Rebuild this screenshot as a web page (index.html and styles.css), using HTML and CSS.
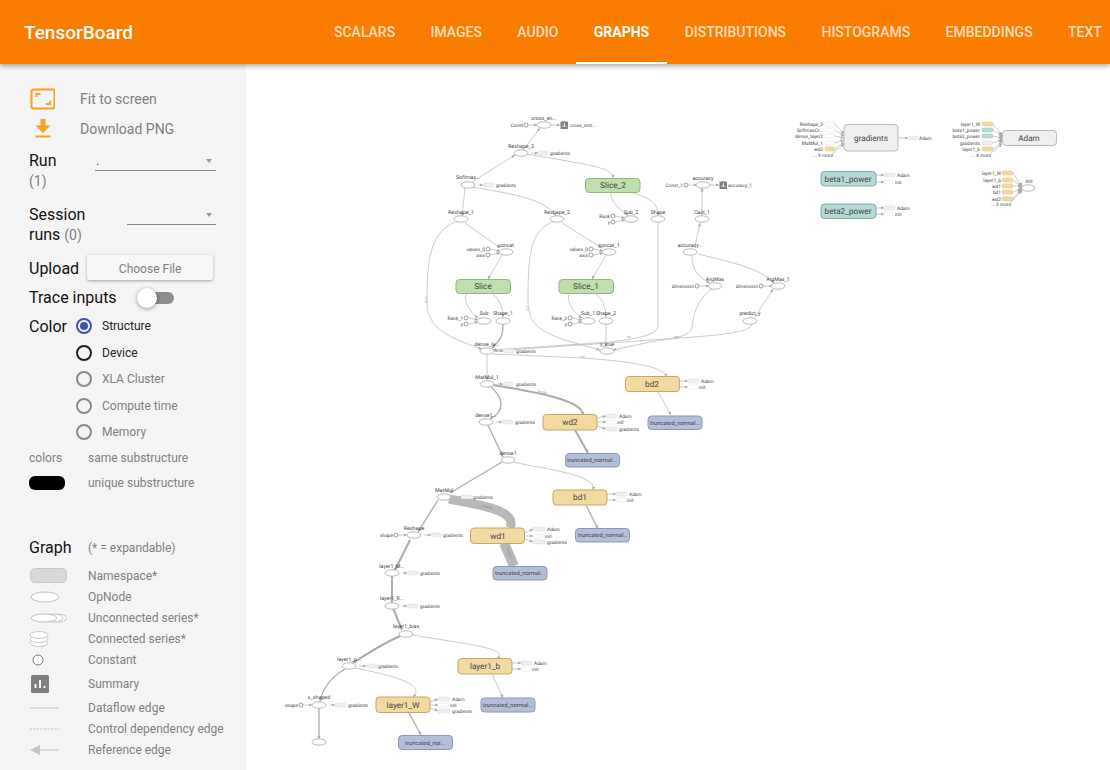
FILE: index.html
```html
<!DOCTYPE html>
<html lang="en">
<head>
<meta charset="utf-8">
<title>TensorBoard</title>
<link rel="stylesheet" href="styles.css">
</head>
<body>
<header class="topbar">
  <div class="brand">TensorBoard</div>
  <nav class="tabs">
    <a class="tab">SCALARS</a><a class="tab">IMAGES</a><a class="tab">AUDIO</a><a class="tab active">GRAPHS</a><a class="tab">DISTRIBUTIONS</a><a class="tab">HISTOGRAMS</a><a class="tab">EMBEDDINGS</a><a class="tab">TEXT</a>
  </nav>
</header>
<div class="body-row">
<aside class="sidebar">
  <div class="action">
    <svg class="action-icon" width="26" height="22" viewBox="0 0 26 22"><rect x="2.500" y="1.500" width="23" height="19" rx="2" fill="none" stroke="#f9a01e" stroke-width="2"/><path d="M7.500 9V6h4M21 13v3h-4" fill="none" stroke="#f9a01e" stroke-width="2"/></svg>
    <span>Fit to screen</span>
  </div>
  <div class="action">
    <svg class="action-icon" width="26" height="22" viewBox="0 0 26 22"><path d="M11.500 1h5v6.500h5l-7.500 7.500-7.500-7.500h5z" fill="#f9a01e"/><rect x="6.500" y="17.500" width="15" height="2" fill="#f9a01e"/></svg>
    <span>Download PNG</span>
  </div>
  <div class="select-row run-row">
    <div class="sel-label run-label"><span class="big">Run</span><br><span class="count">(1)</span></div>
    <div class="select run-select"><span class="sel-value">.</span><i class="caret"></i></div>
  </div>
  <div class="select-row session-row">
    <div class="sel-label session-label"><span class="big">Session<br>runs</span> <span class="count">(0)</span></div>
    <div class="select session-select"><i class="caret"></i></div>
  </div>
  <div class="upload-row">
    <span class="big">Upload</span>
    <div class="file-btn">Choose File</div>
  </div>
  <div class="trace-row">
    <span class="big">Trace inputs</span>
    <div class="toggle"><i class="knob"></i></div>
  </div>
  <div class="color-row">
    <span class="big color-label">Color</span>
    <div class="radios">
      <div class="radio selected"><i class="dot"></i><span>Structure</span></div>
      <div class="radio focus"><i class="dot"></i><span>Device</span></div>
      <div class="radio"><i class="dot"></i><span>XLA Cluster</span></div>
      <div class="radio"><i class="dot"></i><span>Compute time</span></div>
      <div class="radio"><i class="dot"></i><span>Memory</span></div>
    </div>
  </div>
  <div class="legend colors">
    <div class="lg-row"><span class="lg-key">colors</span><span>same substructure</span></div>
    <div class="lg-row"><span class="lg-key"><i class="pill"></i></span><span>unique substructure</span></div>
  </div>
  <div class="graph-head"><span class="big">Graph</span><span class="expand">(* = expandable)</span></div>
  <div class="legend keys">
    <div class="lg-row"><span class="lg-key"><svg width="40" height="18"><rect x="1.500" y="1.500" width="36" height="14" rx="4.500" fill="#d8d8d8" stroke="#c8c8c8"/></svg></span><span>Namespace*</span></div>
    <div class="lg-row"><span class="lg-key"><svg width="40" height="14"><ellipse cx="16" cy="7" rx="14" ry="5" fill="#fff" stroke="#c0c0c0"/></svg></span><span>OpNode</span></div>
    <div class="lg-row"><span class="lg-key"><svg width="40" height="14"><ellipse cx="28" cy="7" rx="10" ry="4" fill="#fff" stroke="#c8c8c8"/><ellipse cx="24" cy="7" rx="10" ry="4" fill="#fff" stroke="#c8c8c8"/><ellipse cx="15" cy="7" rx="13" ry="4" fill="#fff" stroke="#c0c0c0"/></svg></span><span>Unconnected series*</span></div>
    <div class="lg-row"><span class="lg-key"><svg width="40" height="18"><ellipse cx="10" cy="13" rx="9" ry="3.500" fill="#fff" stroke="#c8c8c8"/><ellipse cx="10" cy="9" rx="9" ry="3.500" fill="#fff" stroke="#c8c8c8"/><ellipse cx="10" cy="5" rx="9" ry="3.500" fill="#fff" stroke="#c8c8c8"/></svg></span><span>Connected series*</span></div>
    <div class="lg-row"><span class="lg-key"><svg width="40" height="14"><circle cx="9" cy="7" r="5" fill="#fff" stroke="#777"/></svg></span><span>Constant</span></div>
    <div class="lg-row tall"><span class="lg-key"><svg width="40" height="20"><rect x="2" y="1" width="18" height="18" rx="1.500" fill="#7f7f7f"/><path d="M6.500 14V10M11 14V6M15.500 14v-2" stroke="#fff" stroke-width="1.800"/></svg></span><span>Summary</span></div>
    <div class="lg-row"><span class="lg-key"><svg width="40" height="8"><path d="M1 4H30" stroke="#c4c4c4"/></svg></span><span>Dataflow edge</span></div>
    <div class="lg-row"><span class="lg-key"><svg width="40" height="8"><path d="M1 4H30" stroke="#bbb" stroke-dasharray="2 1.500"/></svg></span><span>Control dependency edge</span></div>
    <div class="lg-row"><span class="lg-key"><svg width="40" height="12"><path d="M9 6H30" stroke="#c4c4c4"/><path d="M1 6l10-5v10z" fill="#c4c4c4"/></svg></span><span>Reference edge</span></div>
  </div>
</aside>
<main class="canvas">
<svg class="graph" width="864" height="706" viewBox="246 64 864 706">
  <defs>
    <marker id="a" markerUnits="userSpaceOnUse" markerWidth="4" markerHeight="3.200" refX="3.500" refY="1.600" orient="auto"><path d="M0 0L3.600 1.600L0 3.200z" fill="#aaa"/></marker>
  </defs>
  <g class="edges" marker-end="url(#a)">
    <path d="M528 125H537"/><path d="M551 125H560"/><path d="M523 150L540 128"/>
    <path d="M472 182L515 155"/><path d="M527 154L573 162C600 167 613 170 613 178"/>
    <path d="M465 188L462 216"/><path d="M472 187C520 195 545 200 556 216"/>
    <path d="M611 192C610 205 625 212 628 216"/><path d="M630 192C645 197 658 200 658 216"/>
    <path d="M465 223L500 248"/><path d="M562 223L602 248"/>
    <path d="M455 222C430 233 427 260 427 300C427 325 440 335 482 349"/>
    <path d="M552 222C530 232 528 255 528 300C528 330 545 335 600 350"/>
    <path d="M658 222L658 325C658 335 640 338 610 342L493 350"/>
    <path d="M712 289C695 300 693 320 692 327C690 337 675 338 650 342L613 350"/>
    <path d="M752 324C750 333 720 335 680 338L494 351"/>
    <path d="M502 255L488 279"/><path d="M606 255L592 279"/>
    <path d="M467 293C462 300 470 312 478 318"/><path d="M492 293C498 298 503 305 503 317"/>
    <path d="M570 293C565 300 573 312 582 318"/><path d="M595 293C601 298 606 305 606 317"/>
    <path d="M469 318L478 320"/><path d="M469 324L478 322"/>
    <path d="M572 318L582 320"/><path d="M572 324L582 322"/>
    <path d="M615 216L625 218"/><path d="M615 222L625 220"/>
    <path d="M490 249L500 251"/><path d="M490 255L500 253"/>
    <path d="M593 249L603 251"/><path d="M593 255L603 253"/>
    <path class="w15" d="M503 324C503 337 500 340 492 348"/><path d="M606 324V347"/>
    <path d="M688 185H697"/><path d="M709 185H719"/>
    <path d="M702 216V188"/><path d="M695 248C696 240 698 232 700 223"/>
    <path d="M692 255C691 270 700 278 710 283"/><path d="M698 254C730 262 760 268 774 283"/>
    <path d="M755 317L773 289"/><path d="M699 286H709"/><path d="M763 286H772"/>
    <path d="M487 354V380"/><path d="M493 354L583 358C640 362 665 368 666 377"/>
    <path d="M658 392L671 415"/><path class="w15" d="M491 387C500 395 505 405 497 414L490 419"/>
    <path class="w2" d="M493 385C535 392 583 400 583 415"/><path class="w2" d="M575 430L588 453"/>
    <path class="w15" d="M488 425L503 457"/><path class="w15" d="M502 462L450 493"/>
    <path d="M513 462C550 470 597 475 593 490"/><path class="w15" d="M586 505L598 529"/>
    <path class="w15" d="M438 500L418 532"/><path d="M398 535H407"/>
    <path class="w2" d="M410 540L395 570"/><path class="w2" d="M392 576V603"/><path class="w2" d="M393 608L402 630"/>
    <path class="w2" d="M400 636C380 645 365 655 353 663"/>
    <path d="M413 635C470 645 510 648 497 659"/><path d="M492 674L503 698"/>
    <path class="w15" d="M345 669C330 678 322 690 320 702"/><path d="M355 668C400 677 425 685 413 697"/>
    <path class="w15" d="M409 713L421 735"/><path class="w15" d="M319 708V739"/><path d="M303 705H312"/>
    <path d="M531 153H538"/><path d="M478 185H483"/><path d="M497 351H503"/><path d="M497 384H503"/><path d="M496 422H502"/><path d="M454 497H461"/><path d="M424 535H431"/>
    <path d="M402 573H407"/><path d="M402 606H407"/><path d="M359 666H366"/><path d="M329 705H335"/>
    <path d="M679 381H688"/><path d="M679 387H688"/><path d="M597 418L606 416"/><path d="M597 422H606"/><path d="M597 426L606 429"/>
    <path d="M607 494H616"/><path d="M607 500H616"/><path d="M525 533L533 529"/><path d="M525 536H533"/><path d="M525 539L533 542"/>
    <path d="M512 663H521"/><path d="M512 669H521"/><path d="M430 702L438 699"/><path d="M430 705H438"/><path d="M430 708L438 711"/>
    <path d="M898 138H908"/><path d="M876 175H884"/><path d="M876 182H884"/><path d="M876 208H884"/><path d="M876 214H884"/>
    <path d="M835 124L844 134"/><path d="M835 130L844 136"/><path d="M835 136L844 138"/><path d="M835 143L844 140"/><path d="M835 149L844 142"/><path d="M832 154L844 144"/>
    <path d="M993 124L1002 135"/><path d="M993 130L1002 136"/><path d="M993 136L1002 138"/><path d="M993 143L1002 140"/><path d="M993 149L1002 142"/><path d="M990 154L1002 144"/>
    <path d="M1013 173L1021 186"/><path d="M1013 180L1021 187"/><path d="M1013 186H1021"/><path d="M1013 192L1021 189"/><path d="M1013 199L1021 190"/><path d="M1010 203L1021 191"/>
  </g>
  <path class="thick" d="M449 499C480 505 518 510 510 528"/>
  <path class="thick wide" d="M504 543L514 566"/>

  <g class="edge-notes">
    <text x="482" y="507" transform="rotate(12 482 507)">?×3136</text>
    <text x="506" y="548" transform="rotate(68 506 548)">7×7×64</text>
    <text x="537" y="392" transform="rotate(14 537 392)">?×1024</text>
    <text x="580" y="358">?×2</text><text x="626" y="338">?×2</text><text x="674" y="338">?×2</text>
    <text x="425" y="296" transform="rotate(90 425 296)">?×10</text><text x="526" y="306" transform="rotate(90 526 306)">?×2</text>
  </g>

  <g class="ops">
    <ellipse class="op" cx="544" cy="125"/><ellipse class="op" cx="521" cy="153"/><ellipse class="op" cx="468" cy="185"/>
    <ellipse class="op" cx="461" cy="219"/><ellipse class="op" cx="557" cy="219"/><ellipse class="op" cx="631" cy="219"/><ellipse class="op" cx="658" cy="219"/>
    <ellipse class="op" cx="703" cy="185"/><ellipse class="op" cx="702" cy="219"/><ellipse class="op" cx="690" cy="252"/>
    <ellipse class="op" cx="506" cy="252"/><ellipse class="op" cx="609" cy="252"/>
    <ellipse class="op" cx="715" cy="286"/><ellipse class="op" cx="778" cy="286"/>
    <ellipse class="op" cx="484" cy="321"/><ellipse class="op" cx="503" cy="321"/><ellipse class="op" cx="588" cy="321"/><ellipse class="op" cx="606" cy="321"/><ellipse class="op" cx="750" cy="321"/>
    <ellipse class="op" cx="487" cy="351"/><ellipse class="op" cx="607" cy="351"/><ellipse class="op" cx="487" cy="384"/><ellipse class="op" cx="486" cy="422"/><ellipse class="op" cx="508" cy="460"/>
    <ellipse class="op" cx="444" cy="497"/><ellipse class="op" cx="414" cy="535"/><ellipse class="op" cx="392" cy="573"/><ellipse class="op" cx="392" cy="606"/><ellipse class="op" cx="406" cy="634"/>
    <ellipse class="op" cx="349" cy="666"/><ellipse class="op" cx="319" cy="705"/><ellipse class="op" cx="319" cy="742"/><ellipse class="op" cx="1028" cy="188"/>
    <circle class="const" cx="526" cy="125"/><circle class="const" cx="686" cy="185"/>
    <circle class="const" cx="613" cy="216"/><circle class="const" cx="613" cy="222"/>
    <circle class="const" cx="488" cy="249"/><circle class="const" cx="488" cy="255"/><circle class="const" cx="591" cy="249"/><circle class="const" cx="591" cy="255"/>
    <circle class="const" cx="697" cy="286"/><circle class="const" cx="761" cy="286"/>
    <circle class="const" cx="466" cy="318"/><circle class="const" cx="466" cy="324"/><circle class="const" cx="570" cy="318"/><circle class="const" cx="570" cy="324"/>
    <circle class="const" cx="396" cy="535"/><circle class="const" cx="301" cy="705"/>
  </g>

  <g class="stubs">
    <rect x="538" y="151" width="10" height="4"/><rect x="483" y="183" width="11" height="4"/><rect x="503" y="349" width="11" height="4"/><rect x="503" y="382" width="10" height="4"/>
    <rect x="502" y="420" width="11" height="4"/><rect x="461" y="495" width="11" height="4"/><rect x="431" y="533" width="10" height="4"/><rect x="407" y="571" width="11" height="4"/>
    <rect x="407" y="604" width="11" height="4"/><rect x="366" y="664" width="11" height="4"/><rect x="335" y="703" width="11" height="4"/>
    <rect x="688" y="379" width="11" height="4"/><rect class="hollow" x="688" y="385" width="10" height="4"/>
    <rect x="606" y="414" width="11" height="4"/><rect class="hollow" x="606" y="420" width="9" height="4"/><rect x="606" y="427" width="11" height="4"/>
    <rect x="616" y="492" width="11" height="4"/><rect class="hollow" x="616" y="498" width="10" height="4"/>
    <rect x="533" y="527" width="12" height="4"/><rect class="hollow" x="533" y="534" width="10" height="4"/><rect x="533" y="540" width="12" height="4"/>
    <rect x="521" y="661" width="11" height="4"/><rect class="hollow" x="521" y="667" width="10" height="4"/>
    <rect x="438" y="697" width="12" height="4"/><rect class="hollow" x="438" y="703" width="10" height="4"/><rect x="438" y="709" width="12" height="4"/>
    <rect x="908" y="136" width="10" height="4"/><rect x="884" y="173" width="11" height="4"/><rect class="hollow" x="884" y="180" width="9" height="4"/><rect x="884" y="206" width="11" height="4"/><rect class="hollow" x="884" y="212" width="9" height="4"/>
    <rect class="hollow" x="825" y="122" width="10" height="4"/><rect class="hollow" x="825" y="128" width="10" height="4"/><rect class="hollow" x="825" y="134" width="10" height="4"/><rect class="hollow" x="825" y="141" width="10" height="4"/><rect class="s-tan" x="825" y="147" width="10" height="4"/>
    <rect class="s-tan" x="982" y="122" width="11" height="4"/><rect class="s-teal" x="982" y="128" width="11" height="4"/><rect class="s-teal" x="982" y="134" width="11" height="4"/><rect x="982" y="141" width="11" height="4"/><rect class="s-tan" x="982" y="147" width="11" height="4"/>
    <rect class="s-tan" x="1002" y="171" width="11" height="4"/><rect class="s-tan" x="1002" y="178" width="11" height="4"/><rect class="s-tan" x="1002" y="184" width="11" height="4"/><rect class="s-tan" x="1002" y="190" width="11" height="4"/><rect class="s-tan" x="1002" y="197" width="11" height="4"/>
  </g>
  <path class="fan" d="M1019 183h3v10h-3z"/><path class="fan" d="M1000 133h3v9h-3z"/>

  <g class="boxes">
    <rect class="box green" x="585.500" y="178.500" width="54.500" height="14"/><rect class="box green" x="456" y="279.500" width="54.500" height="14"/><rect class="box green" x="559" y="279.500" width="54.500" height="14"/>
    <rect class="box tan" x="625.500" y="376.500" width="54" height="15"/><rect class="box tan" x="543" y="414.500" width="54" height="15.500"/><rect class="box tan" x="553" y="490" width="54" height="15"/><rect class="box tan" x="470.500" y="528" width="54" height="15.500"/><rect class="box tan" x="458" y="658.500" width="54" height="15.500"/><rect class="box tan" x="376" y="697" width="54" height="15.500"/>
    <rect class="box blue" x="648" y="416" width="54" height="13.500"/><rect class="box blue" x="565.500" y="453.500" width="54" height="13.500"/><rect class="box blue" x="575.500" y="528.500" width="54" height="13.500"/><rect class="box blue" x="493" y="566.500" width="54" height="13.500"/><rect class="box blue" x="481" y="698" width="54" height="14"/><rect class="box blue" x="398.500" y="735.500" width="54" height="14"/>
    <rect class="box teal" x="821" y="171.500" width="55" height="14.500"/><rect class="box teal" x="821" y="204" width="55" height="14.500"/>
    <rect class="box gray" x="844" y="124.500" width="54" height="26.500"/><rect class="box gray" x="1002.500" y="130.500" width="54" height="15"/>
  </g>
  <g class="sum"><rect x="560.500" y="121.500" width="7.500" height="7.500"/><rect x="719.500" y="181.500" width="7.500" height="7.500"/><path d="M563 127V125M564.500 127V123M566 127V126M722 187V185M723.500 187V183M725 187V186"/></g>

  <g class="t-box">
    <text x="613" y="188">Slice_2</text><text x="483" y="289">Slice</text><text x="586" y="289">Slice_1</text>
    <text x="652" y="387">bd2</text><text x="570" y="425">wd2</text><text x="580" y="500">bd1</text><text x="498" y="539">wd1</text><text x="485" y="669">layer1_b</text><text x="403" y="708">layer1_W</text>
    <text x="848" y="182">beta1_power</text><text x="848" y="214">beta2_power</text><text x="871" y="141">gradients</text><text x="1029" y="141">Adam</text>
  </g>
  <g class="t-blue">
    <text x="675" y="424.500">truncated_normal...</text><text x="592" y="462">truncated_normal...</text><text x="603" y="537">truncated_normal...</text><text x="520" y="575">truncated_normal...</text><text x="508" y="707">truncated_normal...</text><text x="425" y="744.500">truncated_nor...</text>
  </g>
  <g class="t-mid">
    <text x="544" y="120">cross_en...</text><text x="521" y="148">Reshape_3</text><text x="468" y="179">Softmax...</text><text x="461" y="214">Reshape_1</text><text x="557" y="214">Reshape_2</text><text x="631" y="214">Sub_2</text><text x="658" y="214">Shape</text>
    <text x="703" y="180">accuracy</text><text x="702" y="214">Cast_1</text><text x="690" y="247">accuracy...</text><text x="506" y="247">concat</text><text x="609" y="247">concat_1</text>
    <text x="715" y="281">ArgMax</text><text x="778" y="281">ArgMax_1</text><text x="484" y="315">Sub</text><text x="503" y="315">Shape_1</text><text x="588" y="315">Sub_1</text><text x="606" y="315">Shape_2</text><text x="750" y="315">predict_y</text>
    <text x="487" y="346">dense_la...</text><text x="607" y="346">y_true</text><text x="487" y="379">MatMul_1</text><text x="486" y="417">dense1...</text><text x="508" y="455">dense1</text><text x="444" y="492">MatMul</text><text x="414" y="530">Reshape</text>
    <text x="392" y="568">layer1_M...</text><text x="392" y="600">layer1_R...</text><text x="406" y="628">layer1_bias</text><text x="349" y="661">layer1_p...</text><text x="319" y="699">x_shaped</text><text x="1029" y="183">init</text>
  </g>
  <g class="t-end">
    <text x="523" y="127">Const</text><text x="683" y="187">Const_1</text><text x="610" y="218">Rank</text><text x="610" y="224">y</text><text x="485" y="251">values_0</text><text x="485" y="257">axis</text><text x="588" y="251">values_0</text><text x="588" y="257">axis</text>
    <text x="694" y="288">dimension</text><text x="758" y="288">dimension</text><text x="463" y="320">Rank_1</text><text x="463" y="326">y</text><text x="567" y="320">Rank_2</text><text x="567" y="326">y</text><text x="393" y="537">shape</text><text x="298" y="707">shape</text>
    <text x="823" y="126">Reshape_3</text><text x="823" y="132">SoftmaxCr...</text><text x="823" y="138">dense_layer2</text><text x="823" y="145">MatMul_1</text><text x="823" y="151">wd2</text><text x="833" y="156.500">... 9 more</text>
    <text x="980" y="126">layer1_W</text><text x="980" y="132">beta1_power</text><text x="980" y="138">beta2_power</text><text x="980" y="145">gradients</text><text x="980" y="151">layer1_b</text><text x="991" y="156.500">... 4 more</text>
    <text x="1001" y="175">layer1_W</text><text x="1001" y="182">layer1_b</text><text x="1001" y="188">wd1</text><text x="1001" y="194">bd1</text><text x="1001" y="201">wd2</text><text x="1011" y="205.500">... 3 more</text>
  </g>
  <g class="t-start">
    <text x="570" y="127">cross_entr...</text><text x="550" y="155">gradients</text><text x="496" y="187">gradients</text><text x="728" y="187">accuracy_1</text><text x="516" y="353">gradients</text><text x="516" y="386">gradients</text>
    <text x="701" y="383">Adam</text><text x="699" y="389">init</text><text x="515" y="424">gradients</text><text x="619" y="418">Adam</text><text x="617" y="424">init</text><text x="619" y="431">gradients</text>
    <text x="629" y="496">Adam</text><text x="627" y="502">init</text><text x="473" y="499">gradients</text><text x="443" y="537">gradients</text><text x="547" y="531">Adam</text><text x="545" y="538">init</text><text x="547" y="544">gradients</text>
    <text x="420" y="575">gradients</text><text x="420" y="608">gradients</text><text x="378" y="668">gradients</text><text x="348" y="707">gradients</text>
    <text x="534" y="665">Adam</text><text x="532" y="671">init</text><text x="452" y="701">Adam</text><text x="450" y="707">init</text><text x="452" y="713">gradients</text>
    <text x="919" y="140">Adam</text><text x="897" y="177">Adam</text><text x="895" y="184">init</text><text x="897" y="210">Adam</text><text x="895" y="216">init</text>
  </g>
</svg>
</main>
</div>
</body>
</html>
```
FILE: styles.css
```css
* { box-sizing: border-box; }
html, body { margin: 0; height: 100%; overflow: hidden; }
body { font-family: Roboto, "Noto Sans", sans-serif; background: #fff; width: 1110px; height: 770px; }

.topbar { height: 64px; background: #fb7d00; display: flex; align-items: center; position: relative; z-index: 2; box-shadow: 0 2px 5px rgba(0,0,0,.35); color: #fff; white-space: nowrap; }
.brand { font-size: 19px; font-weight: 500; margin-left: 24px; flex: none; width: 292.300px; }
.tabs { display: flex; height: 64px; flex: none; }
.tab { display: flex; align-items: center; padding: 2px 17.700px 0; font-size: 14px; font-weight: 500; color: rgba(255,255,255,.75); border-bottom: 2px solid transparent; }
.tab.active { color: #fff; font-weight: 700; border-bottom-color: #fff; }

.body-row { display: flex; height: 706px; }
.sidebar { width: 246px; flex: none; background: #f5f5f5; padding: 20px 0 0 29px; color: #000; }
.canvas { flex: 1; min-width: 0; background: #fff; }
.graph { display: block; text-rendering: geometricPrecision; }

.big { font-size: 16px; line-height: 20px; color: #111; }
.count { font-size: 14px; line-height: 20px; color: #808080; }

.action { display: flex; align-items: center; height: 30px; font-size: 14px; color: #808080; }
.action-icon { margin-right: 25px; flex: none; }

.select-row { display: flex; height: 40px; }
.run-row { margin-top: 7px; }
.session-row { margin-top: 14px; }
.sel-label { line-height: 20px; flex: none; }
.run-label { width: 66px; }
.session-label { width: 98px; }
.select { border-bottom: 1px solid #888; height: 20px; position: relative; font-size: 14px; color: #555; }
.run-select { width: 121px; }
.session-select { width: 89px; }
.sel-value { position: absolute; left: 1px; top: 0; line-height: 18px; }
.caret { position: absolute; right: 4px; top: 8px; width: 0; height: 0; border-left: 3.5px solid transparent; border-right: 3.5px solid transparent; border-top: 4px solid #999; }

.upload-row { display: flex; align-items: center; margin-top: 10px; height: 25px; }
.upload-row .big { margin-top: 3px; }
.file-btn { margin-left: 8px; width: 126px; height: 25px; background: #f7f7f7; border-radius: 2px; box-shadow: 0 1px 3px rgba(0,0,0,.35); font-size: 12px; color: #808080; display: flex; align-items: center; justify-content: center; padding-top: 3px; }

.trace-row { display: flex; align-items: center; height: 24px; margin-top: 6px; }
.toggle { width: 36px; height: 12px; border-radius: 6px; background: #8c8c8c; margin-left: 21px; position: relative; }
.knob { position: absolute; left: -1px; top: -4px; width: 20px; height: 20px; border-radius: 50%; background: #fff; box-shadow: 0 1px 4px rgba(0,0,0,.4); }

.color-row { display: flex; margin-top: 3px; }
.color-label { margin-top: 4px; width: 47px; }
.radios { display: flex; flex-direction: column; }
.radio { display: flex; align-items: center; height: 26.500px; font-size: 12px; color: #808080; }
.radio .dot { width: 16px; height: 16px; border-radius: 50%; border: 2px solid #8a8a8a; margin-right: 10px; position: relative; flex: none; }
.radio.selected { color: #222; }
.radio.selected .dot { border-color: #3f51b5; }
.radio.selected .dot::after { content: ""; position: absolute; left: 2px; top: 2px; width: 8px; height: 8px; border-radius: 50%; background: #3f51b5; }
.radio.focus { color: #222; }
.radio.focus .dot { border-color: #222; }

.legend { font-size: 12px; color: #808080; }
.lg-row { display: flex; align-items: center; height: 21px; }
.lg-key { width: 59px; flex: none; display: flex; align-items: center; }
.lg-key svg { display: block; flex: none; }
.colors { margin-top: -.5px; }
.colors .lg-row { height: 25px; }
.pill { display: block; width: 36px; height: 14px; border-radius: 6px; background: #000; }
.graph-head { display: flex; align-items: center; margin-top: 43px; height: 20px; }
.graph-head .big { width: 59px; }
.expand { font-size: 12px; color: #808080; }
.keys { margin-top: 7px; }
.lg-row.tall { height: 27px; }

.edges { fill: none; stroke: #bcbcbc; stroke-width: .8; }
.w15 { stroke: #b0b0b0; stroke-width: 1.4; }
.w2 { stroke: #aaa; stroke-width: 2; }
.thick { fill: none; stroke: #b8b8b8; stroke-width: 9; }
.thick.wide { stroke-width: 10; }
.edge-notes text { font-size: 3px; fill: #777; }
.op { rx: 7px; ry: 3.200px; fill: #fff; stroke: #aaa; stroke-width: .8; }
.const { r: 2px; fill: #fff; stroke: #777; stroke-width: .7; }
.stubs rect { rx: 1.500px; fill: #f0f0f0; stroke: #ccc; stroke-width: .5; stroke-dasharray: 1 .6; }
.stubs .hollow { fill: #fff; }
.stubs .s-tan { fill: #f2d9a0; stroke: #e0c488; stroke-dasharray: none; }
.stubs .s-teal { fill: #b7dad6; stroke: #9cc4c0; stroke-dasharray: none; }
.fan { fill: #aaa; }
.box { rx: 3.500px; stroke-width: 1; }
.green { fill: #bfdfad; stroke: #8fb97f; }
.tan { fill: #f3d9a2; stroke: #c4a76a; }
.blue { fill: #b3bedb; stroke: #8b98b3; }
.teal { fill: #b5d9d6; stroke: #7fa8a6; }
.gray { fill: #efefef; stroke: #bbb; }
.sum rect { fill: #7f7f7f; }
.sum path { stroke: #fff; stroke-width: .8; fill: none; }
.t-box text { font-size: 8.200px; text-anchor: middle; fill: #444; }
.t-blue text { font-size: 5.800px; text-anchor: middle; fill: #444; }
.t-mid text { font-size: 5.300px; text-anchor: middle; fill: #444; }
.t-end text { font-size: 4.800px; text-anchor: end; fill: #444; }
.t-start text { font-size: 4.800px; fill: #444; }
```
